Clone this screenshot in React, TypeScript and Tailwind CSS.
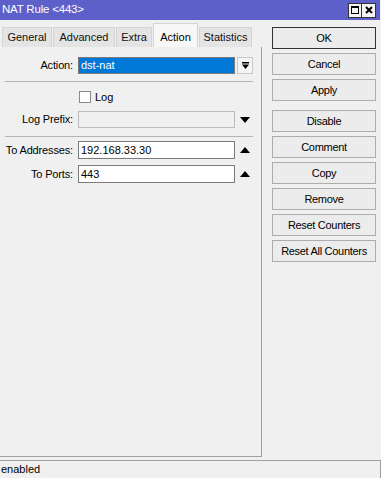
import React from "react"

const font = { fontFamily: '"Liberation Sans", Arial, sans-serif' }

function DownUp({ dir }: { dir: "down" | "up" }) {
  return (
    <div className="w-[16px] h-[17px] flex items-center justify-center">
      <svg width="10" height="6" viewBox="0 0 10 6">
        {dir === "down" ? <polygon points="0,0 10,0 5,6" fill="#000" /> : <polygon points="0,6 10,6 5,0" fill="#000" />}
      </svg>
    </div>
  )
}

function Row({ label, children, className = "" }: { label: string; children: React.ReactNode; className?: string }) {
  return (
    <div className={`flex items-center ${className}`}>
      <div className="w-[74px] pr-[1px] text-right text-[11px] tracking-[-0.15px] text-black leading-none">{label}</div>
      <div className="ml-[4px] flex items-center">{children}</div>
    </div>
  )
}

const tabs = ["General", "Advanced", "Extra", "Action", "Statistics"]
const tabWidths = ["w-[50px]", "w-[62px]", "w-[36px]", "w-[45px]", "w-[53px]"]

const buttons = ["OK", "Cancel", "Apply", "Disable", "Comment", "Copy", "Remove", "Reset Counters", "Reset All Counters"]

export default function App() {
  return (
    <div className="w-[383px] h-[478px] bg-white overflow-hidden" style={font}>
      <div className="w-[381px] h-full bg-[#f0f0f0] flex flex-col">
        {/* title bar */}
        <div className="h-[20px] w-[380px] bg-[#5d60c9] flex items-center pl-[2px] pr-[4px]">
          <span className="text-white text-[11.5px] tracking-[-0.2px] leading-none">NAT Rule &lt;443&gt;</span>
          <div className="ml-auto flex">
            <div className="w-[14px] h-[15px] bg-[#f4f4f4] border border-[#333] flex items-center justify-center">
              <div className="w-[8px] h-[8px] border border-black border-t-2" />
            </div>
            <div className="w-[14px] h-[15px] bg-[#f4f4f4] border border-[#333] border-l-0 flex items-center justify-center">
              <svg width="8" height="8" viewBox="0 0 8 8">
                <path d="M1 1 L7 7 M7 1 L1 7" stroke="#000" strokeWidth="2" />
              </svg>
            </div>
          </div>
        </div>

        <div className="flex flex-1">
          {/* left: tabs + panel */}
          <div className="w-[262px] flex flex-col">
            <div className="h-[27px] flex items-end pl-[2px] gap-[1px]">
              {tabs.map((t, i) =>
                t === "Action" ? (
                  <div
                    key={t}
                    className={`${tabWidths[i]} h-[24px] bg-[#f7f7f7] border border-b-0 border-[#d4d4d4] flex items-start justify-center pt-[5px] text-[11px] text-black`}
                  >
                    {t}
                  </div>
                ) : (
                  <div
                    key={t}
                    className={`${tabWidths[i]} h-[20px] bg-[#e4e4e4] border border-b-0 border-[#d4d4d4] flex items-center justify-center text-[11px] text-[#111]`}
                  >
                    {t}
                  </div>
                )
              )}
            </div>
            <div className="h-[410px] border-r border-b border-[#a0a0a0] flex flex-col">
              <Row label="Action:" className="mt-[10px]">
                <div className="w-[157px] h-[17px] bg-[#0078d7] border border-[#7a7a7a] flex items-center px-[2px] text-white text-[11px]">
                  dst-nat
                </div>
                <div className="ml-[2px] w-[16px] h-[17px] border border-[#c8c8c8] bg-[#f4f4f4] flex items-center justify-center">
                  <svg width="9" height="9" viewBox="0 0 9 9">
                    <rect x="1" y="1" width="7" height="1.5" fill="#000" />
                    <polygon points="1,3.5 8,3.5 4.5,8" fill="#000" />
                  </svg>
                </div>
              </Row>
              <div className="mx-[5px] mt-[7px] w-[248px] border-t border-[#b4b4b4]" />
              <div className="mt-[9px] ml-[79px] flex items-center">
                <div className="w-[12px] h-[12px] bg-white border border-[#8a8a8a]" />
                <span className="ml-[4px] text-[11px] text-black leading-none">Log</span>
              </div>
              <Row label="Log Prefix:" className="mt-[8px]">
                <div className="w-[157px] h-[17px] bg-[#f0f0f0] border border-[#bcbcbc]" />
                <div className="ml-[2px]">
                  <DownUp dir="down" />
                </div>
              </Row>
              <div className="mx-[5px] mt-[8px] w-[248px] border-t border-[#b4b4b4]" />
              <Row label="To Addresses:" className="mt-[4px]">
                <div className="w-[157px] h-[18px] bg-white border border-[#7a7a7a] flex items-center px-[2px] text-[11px] text-black">
                  192.168.33.30
                </div>
                <div className="ml-[2px]">
                  <DownUp dir="up" />
                </div>
              </Row>
              <Row label="To Ports:" className="mt-[6px]">
                <div className="w-[157px] h-[18px] bg-white border border-[#7a7a7a] flex items-center px-[2px] text-[11px] text-black">
                  443
                </div>
                <div className="ml-[2px]">
                  <DownUp dir="up" />
                </div>
              </Row>
            </div>
          </div>

          {/* right: buttons */}
          <div className="pl-[10px] pt-[7px] flex flex-col">
            {buttons.map((b, i) => (
              <div
                key={b}
                className={`w-[104px] h-[22px] flex items-center justify-center text-[11px] tracking-[-0.3px] text-black bg-[#ececec] border ${
                  i === 0 ? "border-[#333]" : "border-[#adadad]"
                } ${i === 0 ? "" : i === 3 ? "mt-[9px]" : "mt-[4px]"}`}
              >
                {b}
              </div>
            ))}
          </div>
        </div>

        {/* status bar */}
        <div className="h-[18px] border-t border-r border-[#a0a0a0] flex items-center pl-[1px] text-[11px] text-black">
          enabled
        </div>
      </div>
    </div>
  )
}
